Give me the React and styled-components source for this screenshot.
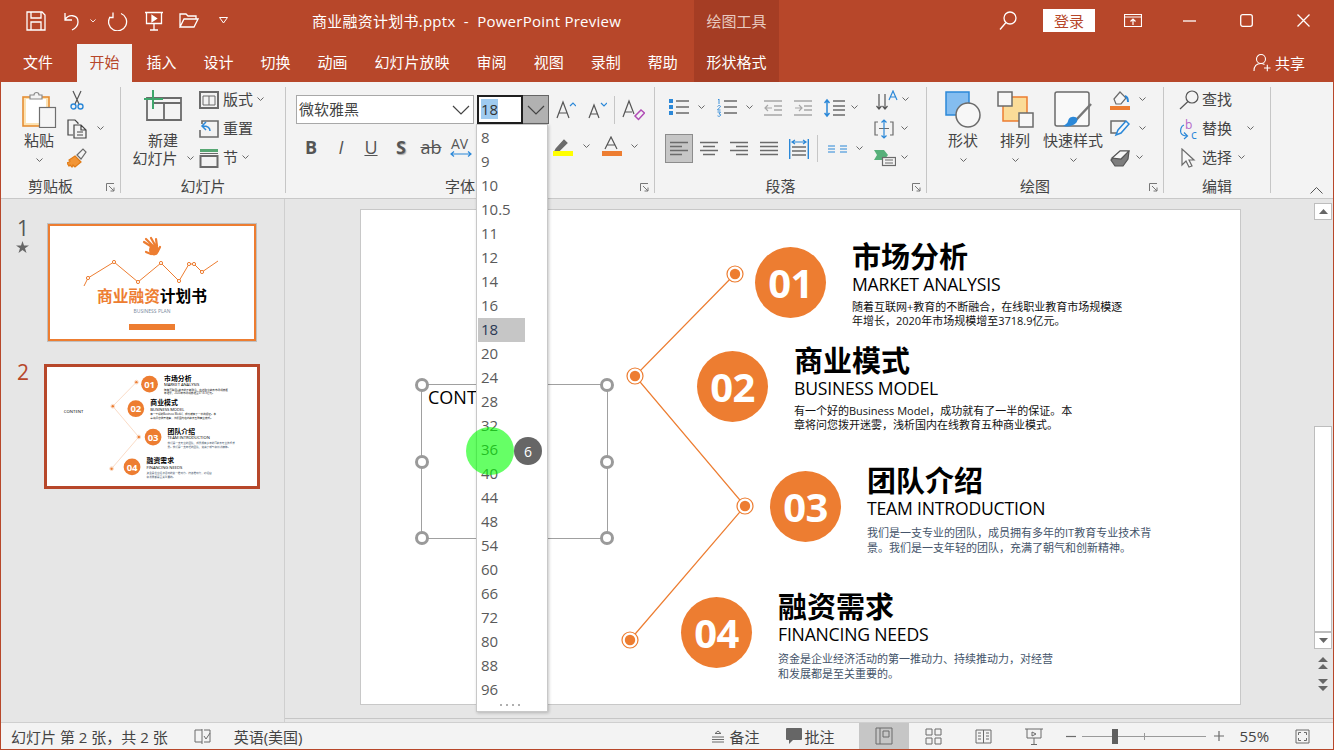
import React from 'react';
import styled, { createGlobalStyle } from 'styled-components';

const GlobalStyle = createGlobalStyle`
    html, body { margin: 0; padding: 0; background: #e6e6e6; }
    * { box-sizing: border-box; }
`;

const BRAND = '#b7472a';
const ORANGE = '#ed7d31';
const GRAY = '#6b6b6b';
const BLUE = '#2b88d8';
const FONT = '"Open Sans", "Noto Sans CJK SC", sans-serif';

/* window */
const Frame = styled.div`
    position: relative;
    width: 1334px;
    height: 750px;
    overflow: hidden;
    display: flex;
    flex-direction: column;
    border: 1px solid ${BRAND};
    border-top: 0;
    font-family: ${FONT};
    color: #444;
`;

const TitleBar = styled.header`
    display: grid;
    grid-template-columns: 693px 85px 1fr;
    height: 41px;
    background: ${BRAND};
    color: #fff;
`;
const Qat = styled.div`
    display: flex;
    align-items: center;
    padding-left: 25px;
    svg { flex: none; }
`;
const QatGap = styled.span`
    width: ${(p) => p.$w}px;
    flex: none;
`;
const DocTitle = styled.div`
    font-size: 15px;
    letter-spacing: 0.25px;
    white-space: pre;
    margin-left: 84px;
`;
const ContextLabel = styled.div`
    background: #a53d24;
    color: #e8c9bf;
    font-size: 15px;
    display: flex;
    align-items: center;
    justify-content: center;
`;
const WindowControls = styled.div`
    display: flex;
    align-items: center;
    justify-content: flex-end;
    padding-right: 1px;
`;
const LoginButton = styled.button`
    width: 52px;
    height: 23px;
    border: 0;
    padding: 0;
    margin: 0 9px 0 26px;
    background: #fff;
    color: ${BRAND};
    font: 15px ${FONT};
`;
const WinButton = styled.div`
    width: 57px;
    display: flex;
    justify-content: center;
`;

const TabBar = styled.nav`
    display: flex;
    height: 41px;
    background: ${BRAND};
    align-items: flex-end;
`;
const Tab = styled.div`
    height: 38px;
    padding: ${(p) => (p.$wide ? '0 24px 3px 22px' : '0 12.5px 3px')};
    margin-right: ${(p) => (p.$wide ? 0 : 2)}px;
    display: flex;
    align-items: center;
    font-size: 15px;
    white-space: nowrap;
    background: ${(p) => (p.$active ? '#f3f3f3' : 'transparent')};
    color: ${(p) => (p.$active ? BRAND : '#fff')};
`;
const ContextTab = styled(Tab)`
    height: 41px;
    margin-left: auto;
    margin-right: 554px;
    width: 85px;
    padding: 0 0 3px;
    justify-content: center;
    align-items: flex-end;
    padding-bottom: 10px;
    background: #a53d24;
`;
const ShareBox = styled.div`
    position: absolute;
    left: 1252px;
    top: 52px;
    display: flex;
    align-items: center;
    gap: 4px;
    color: #fff;
    font-size: 15px;
`;

/* ribbon */
const Ribbon = styled.section`
    display: flex;
    height: 117px;
    padding-top: 5px;
    background: #f3f3f3;
    border-bottom: 1px solid #c8c8c8;
`;
const Group = styled.div`
    width: ${(p) => p.$w}px;
    height: 106px;
    flex: none;
    display: flex;
    flex-direction: column;
    border-right: 1px solid #c6c6c6;
`;
const Body = styled.div`
    flex: 1;
    min-height: 0;
    display: flex;
    padding-left: ${(p) => p.$pad || 0}px;
    gap: ${(p) => p.$gap || 0}px;
`;
const LabelRow = styled.div`
    height: 14px;
    display: flex;
    align-items: center;
`;
const GroupLabel = styled.div`
    flex: 1;
    text-align: center;
    font-size: 15px;
    line-height: 14px;
    color: #444;
`;
const LauncherBox = styled.div`
    width: 20px;
    display: flex;
    justify-content: center;
    padding-top: 2px;
`;
const CollapseBox = styled.div`
    margin-left: auto;
    align-self: flex-end;
    display: flex;
    padding: 0 10px 4px 0;
`;
const BigButton = styled.div`
    width: ${(p) => p.$w}px;
    flex: none;
    display: flex;
    flex-direction: column;
    align-items: center;
    padding-top: ${(p) => p.$top ?? 4}px;
`;
const BigIcon = styled.div`
    height: ${(p) => p.$h || 37}px;
    display: flex;
    justify-content: center;
`;
const BigLabel = styled.div`
    font-size: 15px;
    line-height: ${(p) => p.$lh || 20}px;
    margin-top: ${(p) => p.$mt ?? 2}px;
    white-space: nowrap;
    color: #444;
    display: flex;
    align-items: center;
    gap: ${(p) => p.$gap || 0}px;
`;
const ChevronLine = styled.div`
    margin-top: 6px;
    line-height: 0;
`;
const Stack = styled.div`
    display: flex;
    flex-direction: column;
    gap: 4px;
`;
const Row = styled.div`
    height: 25px;
    display: flex;
    align-items: center;
    gap: ${(p) => p.$gap ?? 4}px;
    margin-left: ${(p) => p.$ml || 0}px;
    font-size: 15px;
    color: #444;
    white-space: nowrap;
`;
const RowText = styled.span`
    margin-bottom: 3px;
`;
const Spacer = styled.span`
    width: ${(p) => p.$w}px;
    flex: none;
`;
const FontCol = styled.div`
    display: flex;
    flex-direction: column;
    padding-top: 8px;
`;
const ToolRow = styled.div`
    display: flex;
    align-items: center;
    height: ${(p) => p.$h}px;
    margin-top: ${(p) => p.$mt || 0}px;
    padding-left: ${(p) => p.$pl || 0}px;
`;
const Combo = styled.div`
    width: ${(p) => p.$w}px;
    height: 29px;
    flex: none;
    background: #fff;
    border: 1px solid #a8a8a8;
    display: flex;
    align-items: center;
    justify-content: space-between;
    padding: 0 3px 0 2px;
    font-size: 15px;
    color: #444;
`;
const ComboText = styled.span`
    margin-bottom: 2px;
`;
const SizeCombo = styled.div`
    width: 72px;
    height: 29px;
    flex: none;
    margin-left: 3px;
    display: flex;
    background: #fff;
`;
const SizeField = styled.div`
    flex: 1;
    border: 2px solid #1f1f1f;
    padding: 2px 0 0 2px;
    font-size: 15px;
    line-height: 20px;
    color: #333;
`;
const Selected = styled.span`
    background: #9fcbf0;
`;
const ArrowCell = styled.div`
    width: 26px;
    background: #b1b1b1;
    border: 1px solid #666;
    border-left: 0;
    display: flex;
    align-items: center;
    justify-content: center;
`;
const FormatButton = styled.div`
    width: 30px;
    flex: none;
    text-align: center;
    font-size: 18px;
    line-height: 24px;
    font-weight: ${(p) => (p.$bold ? 700 : 400)};
    font-style: ${(p) => (p.$italic ? 'italic' : 'normal')};
    text-decoration: ${(p) => p.$deco || 'none'};
    text-shadow: ${(p) => (p.$shadow ? '1px 1px 1px #aaa' : 'none')};
    color: #555;
`;
const VDivider = styled.span`
    width: 1px;
    height: ${(p) => p.$h}px;
    background: #c6c6c6;
    flex: none;
`;
const AlignActive = styled.div`
    width: 28px;
    height: 29px;
    flex: none;
    background: #c6c6c6;
    border: 1px solid #8c8c8c;
    display: flex;
    align-items: center;
    justify-content: center;
`;

/* workspace */
const Workspace = styled.main`
    flex: 1;
    min-height: 0;
    display: flex;
    background: #e6e6e6;
`;
const ThumbPane = styled.aside`
    width: 284px;
    flex: none;
    border-right: 1px solid #cfcfcf;
    display: flex;
    flex-direction: column;
    gap: 22px;
    padding-top: 24px;
`;
const ThumbRow = styled.div`
    display: flex;
    gap: ${(p) => p.$gap}px;
    padding-left: 15px;
    height: ${(p) => p.$h}px;
`;
const ThumbNumber = styled.div`
    width: 14px;
    font-size: 21px;
    line-height: 20px;
    text-align: center;
    margin-top: ${(p) => p.$mt}px;
    color: ${(p) => (p.$active ? BRAND : '#555')};
`;
const StarBox = styled.div`
    line-height: 0;
    margin-top: 3px;
`;
const ThumbFrame = styled.div`
    width: ${(p) => (p.$active ? 216 : 210)}px;
    height: ${(p) => (p.$active ? 125 : 119)}px;
    flex: none;
    overflow: hidden;
    background: #fff;
    border: ${(p) => (p.$active ? `3px solid ${BRAND}` : '1px solid #c0c0c0')};
`;
const CoverSlide = styled.div`
    position: relative;
    width: 208px;
    height: 117px;
    border: 2px solid ${ORANGE};
    display: flex;
    flex-direction: column;
    align-items: center;
    overflow: hidden;
`;
const CoverArt = styled.svg`
    position: absolute;
    left: -2px;
    top: -2px;
`;
const CoverTitle = styled.div`
    margin-top: 60px;
    font-size: 15.7px;
    font-weight: 700;
    line-height: 20px;
    color: #000;
    white-space: nowrap;
    font-family: "Noto Sans CJK SC", sans-serif;
`;
const CoverAccent = styled.span`
    color: ${ORANGE};
`;
const CoverSub = styled.div`
    font-size: 5px;
    line-height: 8px;
    margin-top: 1px;
    color: #7a8aa0;
`;
const CoverButton = styled.div`
    width: 46px;
    height: 6px;
    margin-top: 9px;
    background: ${ORANGE};
`;
const ThumbScale = styled.div`
    transform: scale(0.2364);
    transform-origin: 0 0;
    width: 880px;
    height: 495px;
    margin: 0 0 0 1px;
`;

const Editor = styled.div`
    flex: 1;
    min-width: 0;
    height: 520px;
    padding: 10px 0 0 75px;
    border-bottom: 1px solid #c6c6c6;
`;
const SlideCanvas = styled.div`
    position: relative;
    width: 881px;
    height: 496px;
    background: #fff;
    border: ${(p) => (p.$thumb ? '0' : '1px solid #c8c8c8')};
    color: #000;
    font-family: "Open Sans", "Noto Sans CJK SC", sans-serif;
    flex: none;
`;
const Wire = styled.svg`
    position: absolute;
    left: 0;
    top: 0;
`;
const Topic = styled.div`
    position: absolute;
    left: ${(p) => p.$x}px;
    top: ${(p) => p.$y}px;
    display: flex;
    gap: 26px;
`;
const Badge = styled.div`
    width: 71px;
    height: 71px;
    flex: none;
    margin-top: 9px;
    border-radius: 50%;
    background: ${ORANGE};
    color: #fff;
    font-size: 40px;
    font-weight: 700;
    letter-spacing: -0.5px;
    display: flex;
    align-items: center;
    justify-content: center;
`;
const TopicBody = styled.div`
    display: flex;
    flex-direction: column;
`;
const TopicTitle = styled.div`
    font: 700 29px/35px "Noto Sans CJK SC", sans-serif;
    white-space: nowrap;
`;
const TopicSub = styled.div`
    font-size: 17.6px;
    line-height: 22px;
    letter-spacing: -0.2px;
    white-space: nowrap;
`;
const TopicText = styled.div`
    margin-top: ${(p) => (p.$slate ? 6 : 5)}px;
    font-size: 11px;
    line-height: ${(p) => (p.$slate ? 15 : 14)}px;
    white-space: pre;
    color: ${(p) => (p.$slate ? '#44546a' : '#111')};
`;
const ContentText = styled.div`
    position: absolute;
    left: 67px;
    top: 175px;
    font-size: 18px;
    line-height: 24px;
`;
const SelectionBox = styled.div`
    position: absolute;
    left: 60px;
    top: 174px;
    width: 187px;
    height: 155px;
    border: 1.5px solid #a0a0a0;
`;
const Handle = styled.span`
    position: absolute;
    left: ${(p) => p.$x}%;
    top: ${(p) => p.$y}%;
    width: 14px;
    height: 14px;
    margin: -7px 0 0 -7px;
    border-radius: 50%;
    background: #fff;
    border: 3px solid #9a9a9a;
`;

const ScrollRail = styled.div`
    width: 20px;
    flex: none;
    display: flex;
    flex-direction: column;
    align-items: center;
    padding-top: 4px;
    height: 520px;
    border-bottom: 1px solid #c6c6c6;
`;
const ScrollButton = styled.div`
    width: 18px;
    height: 17px;
    flex: none;
    background: #fff;
    border: 1px solid #bdbdbd;
    display: flex;
    align-items: center;
    justify-content: center;
`;
const ScrollTrack = styled.div`
    flex: none;
    height: 206px;
    margin-top: ${(p) => p.$mt}px;
    width: 18px;
    background: #fff;
    border: 1px solid #bdbdbd;
`;
const PageJump = styled.div`
    margin-top: ${(p) => p.$mt}px;
    line-height: 0;
`;

/* status bar */
const StatusBar = styled.footer`
    height: 27px;
    flex: none;
    display: flex;
    align-items: center;
    background: #f3f3f3;
    border-top: 1px solid #cfcfcf;
    font-size: 15px;
    color: #444;
    white-space: pre;
`;
const StatusItem = styled.div`
    display: flex;
    align-items: center;
    flex: none;
    height: 100%;
    gap: ${(p) => p.$gap ?? 5}px;
    margin-left: ${(p) => p.$ml || 0}px;
    padding-left: ${(p) => p.$pl || 0}px;
`;
const ViewButton = styled.div`
    width: 50px;
    height: 100%;
    flex: none;
    display: flex;
    align-items: center;
    justify-content: center;
    background: ${(p) => (p.$active ? '#c6c6c6' : 'transparent')};
`;
const ZoomTrack = styled.div`
    position: relative;
    width: 124px;
    height: 1px;
    margin-left: 6px;
    background: #9a9a9a;
`;
const ZoomThumb = styled.span`
    position: absolute;
    left: 30px;
    top: -7px;
    width: 6px;
    height: 15px;
    background: #5f5f5f;
`;
const ZoomTick = styled.span`
    position: absolute;
    left: 62px;
    top: -3px;
    width: 1px;
    height: 7px;
    background: #9a9a9a;
`;

/* font size list */
const SizeList = styled.div`
    position: absolute;
    left: 475px;
    top: 124px;
    width: 72px;
    height: 588px;
    padding: 1px 1px 0;
    background: #fff;
    border: 1px solid #c8c8c8;
    box-shadow: 1px 1px 3px rgba(0, 0, 0, 0.22);
`;
const SizeOption = styled.div`
    width: 47px;
    height: 24px;
    padding-left: 3px;
    font-size: 15px;
    line-height: 22px;
    color: ${(p) => (p.$active ? '#2b3a55' : '#5a5a5a')};
    background: ${(p) => (p.$active ? '#c6c6c6' : 'transparent')};
`;
const Grip = styled.div`
    position: absolute;
    left: 23px;
    bottom: 5px;
    width: 20px;
    height: 2px;
    background: repeating-linear-gradient(90deg, #b0b0b0 0 2px, transparent 2px 6px);
`;
const TouchMark = styled.div`
    position: absolute;
    left: 465px;
    top: 427px;
    width: 48px;
    height: 48px;
    border-radius: 50%;
    background: rgba(0, 255, 0, 0.6);
`;
const TouchCount = styled.div`
    position: absolute;
    left: 513px;
    top: 437px;
    width: 28px;
    height: 28px;
    border-radius: 50%;
    background: #666;
    color: #fff;
    font-size: 14px;
    display: flex;
    align-items: center;
    justify-content: center;
`;

/* icons */
const Chev = ({ c = '#666', w = 7 }) => (
    <svg width={w} height={w * 0.6} viewBox="0 0 7 4.2" fill="none" stroke={c} strokeWidth="1">
        <path d="M.5.5 3.5 3.5 6.5.5" />
    </svg>
);
const BigChev = ({ c = '#444' }) => (
    <svg width="18" height="10" viewBox="0 0 18 10" fill="none" stroke={c} strokeWidth="1.2">
        <path d="M1 1l8 8 8-8" />
    </svg>
);
const I = ({ w = 20, h = 20, children, ...rest }) => (
    <svg width={w} height={h} viewBox={`0 0 ${w} ${h}`} fill="none" stroke={GRAY} strokeWidth="1.2" {...rest}>
        {children}
    </svg>
);
const Launcher = () => (
    <I w={9} h={9} stroke="#777" strokeWidth="1">
        <path d="M.5 8V.5H8M3 3l5 5M8 4.500V8H4.500" />
    </I>
);
const W = (props) => <I stroke="#fff" strokeWidth="1.3" {...props} />;

const SizeValues = ['8', '9', '10', '10.5', '11', '12', '14', '16', '18', '20', '24', '28', '32', '36', '40', '44', '48', '54', '60', '66', '72', '80', '88', '96'];

const Topics = [
    { no: '01', x: 394, y: 28, title: '市场分析', sub: 'MARKET ANALYSIS', text: '随着互联网+教育的不断融合，在线职业教育市场规模逐\n年增长，2020年市场规模增至3718.9亿元。' },
    { no: '02', x: 336, y: 132, title: '商业模式', sub: 'BUSINESS MODEL', text: '有一个好的Business Model，成功就有了一半的保证。本\n章将问您拨开迷雾，浅析国内在线教育五种商业模式。' },
    { no: '03', x: 409, y: 252, title: '团队介绍', sub: 'TEAM INTRODUCTION', slate: true, text: '我们是一支专业的团队，成员拥有多年的IT教育专业技术背\n景。我们是一支年轻的团队，充满了朝气和创新精神。' },
    { no: '04', x: 320, y: 378, title: '融资需求', sub: 'FINANCING NEEDS', slate: true, text: '资金是企业经济活动的第一推动力、持续推动力，对经营\n和发展都是至关重要的。' },
];
const Nodes = [[374, 64], [274, 166], [384, 296], [269, 430]];

const SlideBody = ({ thumb }) => (
    <SlideCanvas $thumb={thumb}>
        <Wire width="880" height="495" fill="none">
            <polyline points="374,64 274,166 384,296 269,430" stroke={ORANGE} strokeWidth="1.2" />
            {Nodes.map(([x, y]) => (
                <g key={x}>
                    <circle cx={x} cy={y} r="8" fill="#fff" stroke={ORANGE} strokeWidth="1.2" />
                    <circle cx={x} cy={y} r="5.2" fill={ORANGE} />
                </g>
            ))}
        </Wire>
        <ContentText>CONTENT</ContentText>
        {Topics.map((t) => (
            <Topic key={t.no} $x={t.x} $y={t.y}>
                <Badge>{t.no}</Badge>
                <TopicBody>
                    <TopicTitle>{t.title}</TopicTitle>
                    <TopicSub>{t.sub}</TopicSub>
                    <TopicText $slate={t.slate}>{t.text}</TopicText>
                </TopicBody>
            </Topic>
        ))}
        {!thumb && (
            <SelectionBox>
                {[[0, 0], [50, 0], [100, 0], [0, 50], [100, 50], [0, 100], [50, 100], [100, 100]].map(([x, y]) => (
                    <Handle key={`${x}-${y}`} $x={x} $y={y} />
                ))}
            </SelectionBox>
        )}
    </SlideCanvas>
);

const App = () => {
    return (
        <Frame>
            <GlobalStyle />
            <TitleBar>
                <Qat>
                    <W>
                        <path d="M1 1h15l3 3v15H1zM5 1v6h10V1M5 19v-8h10v8" />
                    </W>
                    <QatGap $w={16} />
                    <W w={19}>
                        <path d="M3 2v7h7M3 9c3-6 13-6 13 2 0 3-2 6-6 8" />
                    </W>
                    <QatGap $w={9} />
                    <Chev c="#fff" w={6} />
                    <QatGap $w={12} />
                    <W w={21}>
                        <path d="M5 1.500v5h-4M13 2.500a9 9 0 1 1-11 3.500" />
                    </W>
                    <QatGap $w={16} />
                    <W w={18}>
                        <path d="M0 1.500h18M1.500 1.500v11h15v-11M9 12.500v6M5 19h8" />
                        <path d="M7 4.500l4.500 3-4.500 3z" fill="#fff" />
                    </W>
                    <QatGap $w={16} />
                    <W>
                        <path d="M1 16V3h6l2 2h8v3M1 16h14l4-8H5z" />
                    </W>
                    <QatGap $w={20} />
                    <W w={9} h={7} strokeWidth="1">
                        <path d="M.5.5h8L4.500 6z" />
                    </W>
                    <DocTitle>{'商业融资计划书.pptx  -  PowerPoint Preview'}</DocTitle>
                </Qat>
                <ContextLabel>绘图工具</ContextLabel>
                <WindowControls>
                    <W w={18} h={20}>
                        <circle cx="11" cy="7" r="6" />
                        <path d="M7 11.500 1 18.500" />
                    </W>
                    <LoginButton>登录</LoginButton>
                    <WinButton>
                        <W w={18} h={14} strokeWidth="1.2">
                            <path d="M.5.5h17v12H.5zM.5 3h17" />
                            <path d="M9 11V5M6.500 7.500 9 5l2.500 2.500" />
                        </W>
                    </WinButton>
                    <WinButton>
                        <W w={13} h={2}>
                            <path d="M0 1h13" />
                        </W>
                    </WinButton>
                    <WinButton>
                        <W w={13} h={13}>
                            <rect x=".7" y=".7" width="11.600" height="11.600" rx="2" />
                        </W>
                    </WinButton>
                    <WinButton>
                        <W w={13} h={13}>
                            <path d="M.5.5l12 12M12.500.5l-12 12" />
                        </W>
                    </WinButton>
                </WindowControls>
            </TitleBar>
            <TabBar>
                <Tab $wide>文件</Tab>
                <Tab $active>开始</Tab>
                <Tab>插入</Tab>
                <Tab>设计</Tab>
                <Tab>切换</Tab>
                <Tab>动画</Tab>
                <Tab>幻灯片放映</Tab>
                <Tab>审阅</Tab>
                <Tab>视图</Tab>
                <Tab>录制</Tab>
                <Tab>帮助</Tab>
                <ContextTab>形状格式</ContextTab>
            </TabBar>
            <ShareBox>
                <W w={18} h={19} strokeWidth="1.1">
                    <circle cx="8" cy="6" r="4.500" />
                    <path d="M1 18c0-5 3-7.500 7-7.500 1.500 0 2.500.3 3.500 1M11 15h6.500M14.300 11.800v6.500" />
                </W>
                共享
            </ShareBox>
            <Ribbon>
                <Group $w={120}>
                    <Body $pad={19} $gap={8}>
                        <BigButton $w={38}>
                            <BigIcon>
                                <I w={35} h={37}>
                                    <rect x="1" y="6" width="26" height="29" fill="#fce3b4" stroke="#e58e34" strokeWidth="1.600" />
                                    <rect x="4" y="8" width="20" height="24" fill="#fff" stroke="none" />
                                    <path d="M8 7V4h4a2.500 2.500 0 0 1 5 0h3v4H8z" fill="#f3f3f3" stroke="#8a8a8a" />
                                    <rect x="17.500" y="16.500" width="16" height="20" fill="#f5f5f5" stroke="#6f6f6f" />
                                </I>
                            </BigIcon>
                            <BigLabel>粘贴</BigLabel>
                            <ChevronLine>
                                <Chev />
                            </ChevronLine>
                        </BigButton>
                        <Stack>
                            <Row $ml={4}>
                                <I w={14} h={20} stroke="#555">
                                    <path d="M3 1l6 13M11 1 5 14" />
                                    <circle cx="3.500" cy="16.500" r="2.500" stroke={BLUE} strokeWidth="1.400" />
                                    <circle cx="10.500" cy="16.500" r="2.500" stroke={BLUE} strokeWidth="1.400" />
                                </I>
                            </Row>
                            <Row $gap={10} $ml={1}>
                                <I w={20} stroke="#444">
                                    <path d="M6 16H1V1h7l3 3v1" />
                                    <path d="M7 6h7l5 5v8H7zM14 6v5h5M10 13h6M10 16h6" />
                                </I>
                                <Chev />
                            </Row>
                            <Row $ml={1}>
                                <I w={20}>
                                    <path d="M8 8l6 6-6 5-2-2-1 2-2-2-1 1-2-3 2-1 1-1-1-1z" fill="#f29536" stroke="#e07b16" />
                                    <path d="M10 7l6-6 3 3-5 7z" fill="#f3f3f3" stroke="#6b6b6b" />
                                </I>
                            </Row>
                        </Stack>
                    </Body>
                    <LabelRow>
                        <GroupLabel>剪贴板</GroupLabel>
                        <LauncherBox>
                            <Launcher />
                        </LauncherBox>
                    </LabelRow>
                </Group>
                <Group $w={165}>
                    <Body $pad={13} $gap={7}>
                        <BigButton $w={58} $top={2}>
                            <BigIcon $h={35}>
                                <I w={40} h={35}>
                                    <path d="M4 31V9h34v22zM21 14v17M9 14h29" strokeWidth="1.800" />
                                    <path d="M10 1v19M1 10h19" stroke="#3ea66b" strokeWidth="2" />
                                </I>
                            </BigIcon>
                            <BigLabel $lh={18} $mt={7}>新建</BigLabel>
                            <BigLabel $lh={18} $mt={0} $gap={9}>
                                幻灯片
                                <Chev />
                            </BigLabel>
                        </BigButton>
                        <Stack>
                            <Row>
                                <I>
                                    <rect x="1" y="2" width="18" height="16" strokeWidth="2" />
                                    <path d="M4 6h12M4 6v9M10 6v9M16 6v9M4 15h12" strokeWidth="1" />
                                </I>
                                <RowText>版式</RowText>
                                <Chev />
                            </Row>
                            <Row>
                                <I>
                                    <path d="M3 5V2h16v16H1V11" strokeWidth="1.600" />
                                    <path d="M11 12c0-3-2-5-7-5M7 3 3 7l4 4" stroke={BLUE} strokeWidth="1.500" />
                                </I>
                                <RowText>重置</RowText>
                            </Row>
                            <Row>
                                <I>
                                    <path d="M1 2.500h18" stroke="#57a773" strokeWidth="3" />
                                    <rect x="1.500" y="8" width="17" height="11" strokeWidth="2" />
                                    <path d="M1 5.500h18" strokeWidth="1" />
                                </I>
                                <RowText>节</RowText>
                                <Chev />
                            </Row>
                        </Stack>
                    </Body>
                    <LabelRow>
                        <GroupLabel>幻灯片</GroupLabel>
                    </LabelRow>
                </Group>
                <Group $w={369}>
                    <Body $pad={10}>
                        <FontCol>
                            <ToolRow $h={29}>
                                <Combo $w={178}>
                                    <ComboText>微软雅黑</ComboText>
                                    <BigChev />
                                </Combo>
                                <SizeCombo>
                                    <SizeField>
                                        <Selected>18</Selected>
                                    </SizeField>
                                    <ArrowCell>
                                        <BigChev />
                                    </ArrowCell>
                                </SizeCombo>
                                <Spacer $w={7} />
                                <I w={20} h={20} stroke="#555">
                                    <path d="M1 18 7 2l6 16M3 13h8" />
                                    <path d="M14 6l3-3 3 3" stroke={BLUE} />
                                </I>
                                <Spacer $w={12} />
                                <I w={19} h={20} stroke="#555">
                                    <path d="M1 18 6 5l5 13M3 14h6" />
                                    <path d="M13 3l3 3 3-3" stroke={BLUE} />
                                </I>
                                <Spacer $w={7} />
                                <VDivider $h={28} />
                                <Spacer $w={7} />
                                <I w={23} h={22} stroke="#555">
                                    <path d="M1 18 7 2l5 13M3 13h7" />
                                    <path d="M13 17l6-6 3.500 3-6 6.500z" stroke="#b04bb5" strokeWidth="1.500" />
                                </I>
                            </ToolRow>
                            <ToolRow $h={25} $mt={10}>
                                <FormatButton $bold>B</FormatButton>
                                <FormatButton $italic>I</FormatButton>
                                <FormatButton $deco="underline">U</FormatButton>
                                <FormatButton $bold $shadow>S</FormatButton>
                                <FormatButton $deco="line-through">ab</FormatButton>
                                <I w={30} h={24} stroke={BLUE}>
                                    <text x="5" y="14" fontSize="14" fill="#555" stroke="none" fontFamily="Open Sans">AV</text>
                                    <path d="M5 19h20M8 16.500 5 19l3 2.500M22 16.500l3 2.500-3 2.500" />
                                </I>
                                <Spacer $w={77} />
                                <I w={21} h={22}>
                                    <path d="M3 13 11 4l3 3-8 8H2z" fill="#6b6b6b" stroke="#6b6b6b" />
                                    <path d="M0 17.500h20" stroke="#ffff00" strokeWidth="5" />
                                </I>
                                <Spacer $w={9} />
                                <Chev />
                                <Spacer $w={12} />
                                <I w={20} h={22} stroke="#555">
                                    <path d="M3 13 9 1l6 12M5 9h8" />
                                    <path d="M0 17.500h20" stroke={ORANGE} strokeWidth="5" />
                                </I>
                                <Spacer $w={9} />
                                <Chev />
                            </ToolRow>
                        </FontCol>
                    </Body>
                    <LabelRow>
                        <GroupLabel>字体</GroupLabel>
                        <LauncherBox>
                            <Launcher />
                        </LauncherBox>
                    </LabelRow>
                </Group>
                <Group $w={272}>
                    <Body $pad={10}>
                        <FontCol>
                            <ToolRow $h={25} $pl={4}>
                                <I>
                                    <path d="M0 2h4v4H0zM0 8h4v4H0zM0 14h4v4H0z" fill={BLUE} stroke="none" transform="translate(0 -1)" />
                                    <path d="M7 3h13M7 9h13M7 15h13" strokeWidth="1.500" />
                                </I>
                                <Spacer $w={9} />
                                <Chev />
                                <Spacer $w={12} />
                                <I>
                                    <path d="M2 1v5M1 1.500h1M.5 8.500c1-1.500 3-1 3 0S1 10.500 .5 12h3M.5 14h3l-1.500 2c1.500 0 2 .5 1.500 1.500s-2 1-3 .3" stroke={BLUE} strokeWidth=".9" />
                                    <path d="M7 3h13M7 9h13M7 15h13" strokeWidth="1.500" />
                                </I>
                                <Spacer $w={9} />
                                <Chev />
                                <Spacer $w={11} />
                                <I w={18} stroke="#a8a8a8">
                                    <path d="M0 3h18M10 8h8M10 12h8M0 17h18" strokeWidth="1.500" />
                                    <path d="M1 10h7M4 7l-3 3 3 3" />
                                </I>
                                <Spacer $w={12} />
                                <I w={18} stroke="#a8a8a8">
                                    <path d="M0 3h18M10 8h8M10 12h8M0 17h18" strokeWidth="1.500" />
                                    <path d="M1 10h7M5 7l3 3-3 3" />
                                </I>
                                <Spacer $w={12} />
                                <I w={21}>
                                    <path d="M3 2v16M0.500 5 3 2l2.500 3M0.500 15 3 18l2.500-3" stroke={BLUE} strokeWidth="1.500" />
                                    <path d="M9 3h12M9 8h12M9 12h12M9 17h12" strokeWidth="1.500" />
                                </I>
                                <Spacer $w={6} />
                                <Chev />
                            </ToolRow>
                            <ToolRow $h={29} $mt={14}>
                                <AlignActive>
                                    <I w={18} h={16}>
                                        <path d="M0 1.500h18M0 5.500h12M0 9.500h18M0 13.500h12" strokeWidth="1.500" />
                                    </I>
                                </AlignActive>
                                <Spacer $w={7} />
                                <I w={18} h={16}>
                                    <path d="M0 1.500h18M3 5.500h12M0 9.500h18M3 13.500h12" strokeWidth="1.500" />
                                </I>
                                <Spacer $w={12} />
                                <I w={18} h={16}>
                                    <path d="M0 1.500h18M6 5.500h12M0 9.500h18M6 13.500h12" strokeWidth="1.500" />
                                </I>
                                <Spacer $w={12} />
                                <I w={18} h={16}>
                                    <path d="M0 1.500h18M0 5.500h18M0 9.500h18M0 13.500h18" strokeWidth="1.500" />
                                </I>
                                <Spacer $w={11} />
                                <I w={20}>
                                    <path d="M.7 0v20M19.300 0v20" stroke={BLUE} strokeWidth="1.400" />
                                    <path d="M3 3h14M6 1 3 3l3 2M14 1l3 2-3 2" stroke={BLUE} />
                                    <path d="M3 8h14M3 12h14M3 16h14" strokeWidth="1.500" />
                                </I>
                                <Spacer $w={8} />
                                <VDivider $h={27} />
                                <Spacer $w={10} />
                                <I h={10} stroke={BLUE}>
                                    <path d="M0 2h7M0 5h7M0 8h7M12 2h7M12 5h7M12 8h7" strokeWidth="1.200" />
                                </I>
                                <Spacer $w={8} />
                                <Chev />
                            </ToolRow>
                        </FontCol>
                        <Spacer $w={13} />
                        <Stack>
                            <Row>
                                <I w={22} stroke="#555">
                                    <path d="M3 4v15M0.500 16 3 19l2.500-3M9 4v15M6.500 16 9 19l2.500-3" />
                                    <path d="M13 10l4-9 4 9M14.500 7h5" stroke={BLUE} />
                                </I>
                                <Chev />
                            </Row>
                            <Row $gap={7} $ml={-2}>
                                <I w={20} h={20}>
                                    <path d="M4 3H1v13h3M16 3h3v13h-3M5 9.500h10" />
                                    <path d="M10 1v18M7.500 3.500 10 1l2.500 2.500M7.500 16.500 10 19l2.500-2.500" stroke={BLUE} />
                                </I>
                                <Chev />
                            </Row>
                            <Row $gap={5} $ml={-2}>
                                <I w={22} h={20}>
                                    <path d="M0 2h10l4 5-4 5H0l3-5z" fill="#57b07a" stroke="none" />
                                    <rect x="8.500" y="9.500" width="13" height="8" fill="#f3f3f3" />
                                    <path d="M11 12h8M11 15h8" strokeWidth="1" />
                                </I>
                                <Chev />
                            </Row>
                        </Stack>
                    </Body>
                    <LabelRow>
                        <GroupLabel>段落</GroupLabel>
                        <LauncherBox>
                            <Launcher />
                        </LauncherBox>
                    </LabelRow>
                </Group>
                <Group $w={237}>
                    <Body $pad={16}>
                        <BigButton $w={40}>
                            <BigIcon>
                                <I w={37} h={37}>
                                    <rect x="1" y="1" width="23" height="23" fill="#84bdf0" stroke={BLUE} strokeWidth="1.500" />
                                    <circle cx="23" cy="24" r="12" fill="#f7f7f7" strokeWidth="1.500" />
                                </I>
                            </BigIcon>
                            <BigLabel>形状</BigLabel>
                            <ChevronLine>
                                <Chev />
                            </ChevronLine>
                        </BigButton>
                        <Spacer $w={12} />
                        <BigButton $w={40}>
                            <BigIcon>
                                <I w={37} h={37}>
                                    <rect x="6" y="6" width="24" height="24" fill="#fbdc98" stroke={ORANGE} strokeWidth="1.500" />
                                    <rect x="1" y="1" width="14" height="14" fill="#f7f7f7" strokeWidth="1.500" />
                                    <rect x="22" y="22" width="14" height="14" fill="#f7f7f7" strokeWidth="1.500" />
                                </I>
                            </BigIcon>
                            <BigLabel>排列</BigLabel>
                            <ChevronLine>
                                <Chev />
                            </ChevronLine>
                        </BigButton>
                        <Spacer $w={8} />
                        <BigButton $w={60}>
                            <BigIcon>
                                <I w={38} h={37}>
                                    <rect x="1" y="1" width="34" height="34" rx="2" fill="#f9f9f9" strokeWidth="1.500" />
                                    <path d="M37 13 22 29" stroke="#777" strokeWidth="2.500" />
                                    <path d="M18 26c5-1 7 3 4 6-3 3-8 4-13 3 3-2 5-3 5-5 1-3 2-4 4-4z" fill={BLUE} stroke="none" />
                                </I>
                            </BigIcon>
                            <BigLabel>快速样式</BigLabel>
                            <ChevronLine>
                                <Chev />
                            </ChevronLine>
                        </BigButton>
                        <Spacer $w={7} />
                        <Stack>
                            <Row $gap={9}>
                                <I>
                                    <path d="M4 9l6-7 6 6-5 6H6z" fill="#f7f7f7" />
                                    <path d="M15 6c3 1 3 4 3 6" stroke={BLUE} strokeWidth="2" />
                                    <path d="M0 18h20" stroke={ORANGE} strokeWidth="4" />
                                </I>
                                <Chev />
                            </Row>
                            <Row $gap={9}>
                                <I>
                                    <path d="M8 14H1V2h14v3" strokeWidth="1.500" />
                                    <path d="M6 16l2-5 8-9 3 3-8 9z" fill="#f7f7f7" stroke={BLUE} strokeWidth="1.500" />
                                </I>
                                <Chev />
                            </Row>
                            <Row $gap={6}>
                                <I>
                                    <path d="M1 12 10 3h9l-1 8-5 7H5z" fill="#7d7d7d" stroke="#555" />
                                    <path d="M2 10l8-7h9l-8 8z" fill="#f7f7f7" stroke="#555" />
                                </I>
                                <Chev />
                            </Row>
                        </Stack>
                    </Body>
                    <LabelRow>
                        <GroupLabel>绘图</GroupLabel>
                        <LauncherBox>
                            <Launcher />
                        </LauncherBox>
                    </LabelRow>
                </Group>
                <Group $w={107}>
                    <Body $pad={15}>
                        <Stack>
                            <Row $gap={3}>
                                <I w={20} stroke="#555">
                                    <circle cx="13" cy="7" r="6" />
                                    <path d="M9 11.500 1 19" />
                                </I>
                                <RowText>查找</RowText>
                            </Row>
                            <Row $gap={3}>
                                <I w={20} h={26}>
                                    <text x="6" y="12.500" fontSize="12" fill="#b466c8" stroke="none">b</text>
                                    <text x="12" y="22.500" fontSize="12" fill={BLUE} stroke="none">c</text>
                                    <path d="M5 9C2 10 1 14 2 17c1 2 3 3 6 3M5 16.500l3.500 3.500L5 23" stroke={BLUE} />
                                </I>
                                <RowText>替换</RowText>
                                <Spacer $w={9} />
                                <Chev />
                            </Row>
                            <Row $gap={3}>
                                <I w={20}>
                                    <path d="M3 1v16l4-4 3 6 3-1-3-6h5z" fill="#f7f7f7" />
                                </I>
                                <RowText>选择</RowText>
                                <Spacer $w={0} />
                                <Chev />
                            </Row>
                        </Stack>
                    </Body>
                    <LabelRow>
                        <GroupLabel>编辑</GroupLabel>
                    </LabelRow>
                </Group>
                <CollapseBox>
                    <I w={13} h={7} stroke="#555" strokeWidth="1">
                        <path d="M.5 6.500 6.500.5l6 6" />
                    </I>
                </CollapseBox>
            </Ribbon>
            <Workspace>
                <ThumbPane>
                    <ThumbRow $gap={17} $h={119}>
                        <div>
                            <ThumbNumber $mt={-5}>1</ThumbNumber>
                            <StarBox>
                                <I w={13} h={12} fill="#666" stroke="none">
                                    <path d="M6.500 0 8 4.500h5L9 7.300 10.500 12 6.500 9 2.500 12 4 7.300 0 4.500h5z" />
                                </I>
                            </StarBox>
                        </div>
                        <ThumbFrame>
                            <CoverSlide>
                                <CoverArt width="208" height="117" fill="none">
                                    <polyline points="36,62 40,54 66,38 90,58 113,39 131,57 141,40 146,40 154,48 170,37" stroke={ORANGE} />
                                    {[[40, 54], [66, 38], [90, 58], [113, 39], [131, 57], [141, 40], [146, 40], [154, 48]].map(([x, y]) => (
                                        <circle key={x} cx={x} cy={y} r="1.600" fill="#fff" stroke={ORANGE} />
                                    ))}
                                    <g stroke={ORANGE} strokeWidth="2.200" strokeLinecap="round">
                                        <path d="M104 23 96 18M105 22 98 15M107 21 103 14M109 22 108 15M110 27 112 23M103 30 98 28" />
                                    </g>
                                    <ellipse cx="106" cy="26" rx="5" ry="5.500" fill={ORANGE} />
                                </CoverArt>
                                <CoverTitle>
                                    <CoverAccent>商业融资</CoverAccent>计划书
                                </CoverTitle>
                                <CoverSub>BUSINESS PLAN</CoverSub>
                                <CoverButton />
                            </CoverSlide>
                        </ThumbFrame>
                    </ThumbRow>
                    <ThumbRow $gap={14} $h={125}>
                        <ThumbNumber $active $mt={-2}>2</ThumbNumber>
                        <ThumbFrame $active>
                            <ThumbScale>
                                <SlideBody thumb />
                            </ThumbScale>
                        </ThumbFrame>
                    </ThumbRow>
                </ThumbPane>
                <Editor>
                    <SlideBody />
                </Editor>
                <ScrollRail>
                    <ScrollButton>
                        <I w={9} h={5} fill="#666" stroke="none">
                            <path d="M0 5l4.500-5L9 5z" />
                        </I>
                    </ScrollButton>
                    <ScrollTrack $mt={206} />
                    <ScrollButton>
                        <I w={9} h={5} fill="#666" stroke="none">
                            <path d="M0 0l4.500 5L9 0z" />
                        </I>
                    </ScrollButton>
                    <PageJump $mt={8}>
                        <I w={10} h={12} fill="#666" stroke="none">
                            <path d="M0 5l5-5 5 5zM0 12l5-5 5 5z" />
                        </I>
                    </PageJump>
                    <PageJump $mt={10}>
                        <I w={10} h={12} fill="#666" stroke="none">
                            <path d="M0 0l5 5 5-5zM0 7l5 5 5-5z" />
                        </I>
                    </PageJump>
                </ScrollRail>
            </Workspace>
            <StatusBar>
                <StatusItem $pl={10}>幻灯片 第 2 张，共 2 张</StatusItem>
                <StatusItem $ml={26}>
                    <I w={17} h={17} strokeWidth="1">
                        <path d="M8 2H1v12h7M8 1v15M10 2h6v12h-6" />
                        <path d="M10 8l2 3 4-6" />
                    </I>
                </StatusItem>
                <StatusItem $ml={23}>英语(美国)</StatusItem>
                <StatusItem $ml={408}>
                    <I w={14} h={13} strokeWidth="1">
                        <path d="M4 3.500 7 1l3 2.500zM1 7h12M1 9.500h12M1 12h12" />
                    </I>
                    备注
                </StatusItem>
                <StatusItem $ml={25} $gap={2}>
                    <I w={18} h={18} fill="#666" stroke="none">
                        <path d="M2 1h14a1 1 0 0 1 1 1v10a1 1 0 0 1-1 1H8l-4 4v-4H2a1 1 0 0 1-1-1V2a1 1 0 0 1 1-1z" />
                    </I>
                    批注
                </StatusItem>
                <Spacer $w={24} />
                <ViewButton $active>
                    <I w={18} h={18} strokeWidth="1">
                        <path d="M1 1h16v16H1zM5 1v16M8 4h6v6H8z" />
                    </I>
                </ViewButton>
                <ViewButton>
                    <I w={17} h={17} strokeWidth="1">
                        <path d="M1 1h6v6H1zM10 1h6v6h-6zM1 10h6v6H1zM10 10h6v6h-6z" />
                    </I>
                </ViewButton>
                <ViewButton>
                    <I w={17} h={17} strokeWidth="1">
                        <path d="M1 2h15v13H1zM8.500 2v13M3 5h3M3 8h3M3 11h3M11 5h3M11 8h3M11 11h3" />
                    </I>
                </ViewButton>
                <ViewButton>
                    <I w={18} h={17} strokeWidth="1">
                        <path d="M0 1h18M2 1v9h14V1M9 10v6M6 16.500h6M7 4l4 2-4 2z" />
                    </I>
                </ViewButton>
                <StatusItem $ml={7} $gap={0}>
                    <I w={10} h={3}>
                        <path d="M0 1.500h10" />
                    </I>
                    <ZoomTrack>
                        <ZoomThumb />
                        <ZoomTick />
                    </ZoomTrack>
                    <Spacer $w={8} />
                    <I w={10} h={10}>
                        <path d="M0 5h10M5 0v10" />
                    </I>
                </StatusItem>
                <StatusItem $ml={16}>55%</StatusItem>
                <StatusItem $ml={26}>
                    <I w={15} h={15} strokeWidth="1">
                        <path d="M1 1h13v13H1zM3.500 6V3.500H6M9 3.500h2.500V6M11.500 9v2.500H9M6 11.500H3.500V9" />
                    </I>
                </StatusItem>
            </StatusBar>
            <SizeList>
                {SizeValues.map((v) => (
                    <SizeOption key={v} $active={v === '18'}>
                        {v}
                    </SizeOption>
                ))}
                <Grip />
            </SizeList>
            <TouchMark />
            <TouchCount>6</TouchCount>
        </Frame>
    );
};

export default App;
